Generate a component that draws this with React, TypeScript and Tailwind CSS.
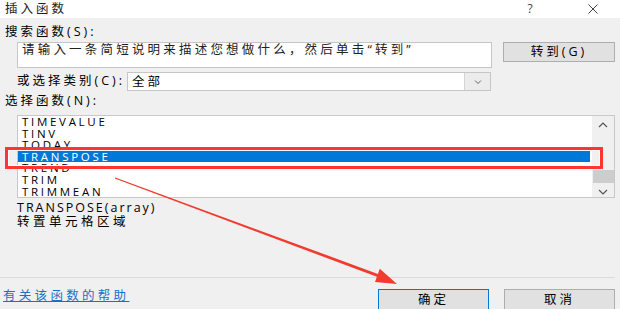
import React from "react";

const functions = ["TIMEVALUE", "TINV", "TODAY", "TRANSPOSE", "TREND", "TRIM", "TRIMMEAN"];
const selected = "TRANSPOSE";

function Chevron({ up = false, className = "" }: { up?: boolean; className?: string }) {
  return (
    <svg width="10" height="6" viewBox="0 0 10 6" className={className}>
      <polyline
        points={up ? "1,5 5,1 9,5" : "1,1 5,5 9,1"}
        fill="none"
        stroke="#555"
        strokeWidth="1.2"
      />
    </svg>
  );
}

export default function App() {
  return (
    <div className="relative h-[309px] w-[620px] overflow-hidden bg-[#f0f0f0] font-['Open_Sans','Noto_Sans_CJK_SC',sans-serif] text-[12.5px] text-black">
      {/* title bar */}
      <div className="flex h-[18px] items-center bg-white">
        <span className="pl-[5px] leading-[18px] tracking-[3px] text-[#222]">插入函数</span>
        <span className="ml-auto w-[12px] text-center text-[12px] text-[#444]">?</span>
        <svg width="10" height="10" viewBox="0 0 10 10" className="ml-[52px] mr-[22px]">
          <path d="M0.5 0.5 L9.5 9.5 M9.5 0.5 L0.5 9.5" stroke="#444" strokeWidth="1" />
        </svg>
      </div>

      <div className="pl-[5px] pt-[7px] leading-[14px] tracking-[3px]">搜索函数(S):</div>

      <div className="mt-[3px] flex pl-[17px]">
        <div className="h-[26px] w-[475px] border border-[#c6c6c6] bg-white pl-[4px] leading-[14px] tracking-[3.2px] text-[#222]">
          请输入一条简短说明来描述您想做什么，然后单击“转到”
        </div>
        <button className="ml-[11px] h-[20px] w-[112px] border border-[#adadad] bg-[#e1e1e1] leading-[18px] tracking-[3px]">
          转到(G)
        </button>
      </div>

      <div className="mt-[4px] flex items-center pl-[17px]">
        <span className="w-[110px] tracking-[3px]">或选择类别(C):</span>
        <div className="flex h-[19px] w-[364px] border border-[#c6c6c6] bg-white">
          <span className="flex-1 pl-[4px] leading-[17px] tracking-[3px]">全部</span>
          <div className="flex w-[26px] items-center justify-center border-l border-[#d4d4d4] bg-[#ececec]">
            <Chevron className="scale-75" />
          </div>
        </div>
      </div>

      <div className="mt-[3px] pl-[5px] leading-[14px] tracking-[3px]">选择函数(N):</div>

      {/* function list */}
      <div className="ml-[17px] mt-[7px] flex h-[83px] w-[598px] border border-[#c8c8c8] bg-white">
        <div className="flex-1 pr-[2px]">
          {functions.map((name) => (
            <div
              key={name}
              className={
                name === selected
                  ? "h-[11.6px] bg-[#0078d7] pl-[4px] text-[11.5px] leading-[11.6px] tracking-[2.7px] text-white"
                  : "h-[11.6px] pl-[4px] text-[11.5px] leading-[11.6px] tracking-[2.7px]"
              }
            >
              {name}
            </div>
          ))}
        </div>
        <div className="flex w-[22px] flex-col items-center bg-[#f0f0f0]">
          <Chevron up className="mt-[6px]" />
          <div className="mt-[42px] h-[13px] w-[21px] bg-[#cdcdcd]" />
          <Chevron className="mt-[6px]" />
        </div>
      </div>

      <div className="mt-[3px] pl-[17px] leading-[14px]">
        <div className="tracking-[2px]">TRANSPOSE(array)</div>
        <div className="tracking-[3.5px]">转置单元格区域</div>
      </div>

      <div className="mt-[48px] h-px w-[615px] bg-[#dadada]" />

      <div className="mt-[11px] flex items-start pl-[3px]">
        <a className="leading-[14px] tracking-[3.3px] text-[#1a6fc9] underline">有关该函数的帮助</a>
        <button className="ml-auto h-[22px] w-[111px] border border-[#0078d7] bg-[#e1e1e1] tracking-[3px]">确定</button>
        <button className="ml-[15px] mr-[5px] h-[22px] w-[111px] border border-[#adadad] bg-[#e1e1e1] tracking-[3px]">
          取消
        </button>
      </div>

      {/* annotation: red highlight box */}
      <div className="pointer-events-none absolute left-[5px] top-[147px] h-[22px] w-[598px] border-[3px] border-[#ff3434] shadow-[inset_0_0_0_1px_white]" />

      {/* annotation: red arrow */}
      <svg className="pointer-events-none absolute left-0 top-0" width="620" height="309">
        <polygon
          points="114.8,178.5 115.2,177.5 377.9,273.9 379.8,268.8 397,284 375,281.9 376.9,276.8"
          fill="#f23a2e"
        />
      </svg>
    </div>
  );
}
